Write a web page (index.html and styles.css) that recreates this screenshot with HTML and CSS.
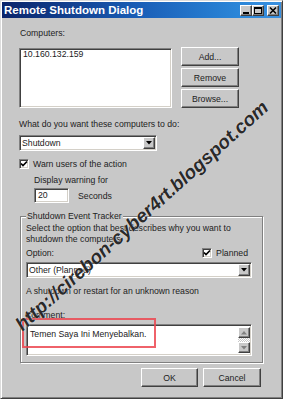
FILE: index.html
```html
<!DOCTYPE html>
<html>
<head>
<meta charset="utf-8">
<link rel="stylesheet" href="styles.css">
</head>
<body>
<div class="window">
  <div class="titlebar">
    <span class="title">Remote Shutdown Dialog</span>
    <div class="tbtns">
      <span class="tbtn"><svg width="10" height="9" viewBox="0 0 10 9"><rect x="2" y="6" width="6" height="2" fill="#000"/></svg></span>
      <span class="tbtn"><svg width="10" height="9" viewBox="0 0 10 9"><rect x="1.5" y="1.5" width="7" height="6" fill="none" stroke="#000"/><rect x="1" y="1" width="8" height="2" fill="#000"/></svg></span>
      <span class="tbtn close"><svg width="10" height="9" viewBox="0 0 10 9"><path d="M2 1.5 L8 7.5 M8 1.5 L2 7.5" stroke="#000" stroke-width="1.6"/></svg></span>
    </div>
  </div>
  <div class="content">
    <div class="label l-computers">Computers:</div>
    <div class="comp-row">
      <div class="listbox sunken"><div class="item">10.160.132.159</div></div>
      <div class="btn-col">
        <div class="btn">Add...</div>
        <div class="btn">Remove</div>
        <div class="btn">Browse...</div>
      </div>
    </div>
    <div class="label l-what">What do you want these computers to do:</div>
    <div class="combo combo-action sunken">
      <span class="combo-text">Shutdown</span>
      <span class="arrow"><svg width="6" height="4" viewBox="0 0 6 4"><path d="M0 0 H6 L3 3.5 Z" fill="#000"/></svg></span>
    </div>
    <div class="check-row warn">
      <span class="cb sunken"><svg width="8" height="8" viewBox="0 0 8 8"><path d="M1 3.5 L3 5.5 L7 1.5" fill="none" stroke="#000" stroke-width="1.7"/></svg></span>
      <span>Warn users of the action</span>
    </div>
    <div class="label l-display">Display warning for</div>
    <div class="seconds-row">
      <div class="edit sunken">20</div>
      <span>Seconds</span>
    </div>
    <fieldset class="group">
      <legend>Shutdown Event Tracker</legend>
      <p class="desc">Select the option that best describes why you want to<br>shutdown the computers</p>
      <div class="option-row">
        <span>Option:</span>
        <span class="check-row planned">
          <span class="cb sunken"><svg width="8" height="8" viewBox="0 0 8 8"><path d="M1 3.5 L3 5.5 L7 1.5" fill="none" stroke="#000" stroke-width="1.7"/></svg></span>
          <span>Planned</span>
        </span>
      </div>
      <div class="combo combo-option sunken">
        <span class="combo-text">Other (Planned)</span>
        <span class="arrow"><svg width="6" height="4" viewBox="0 0 6 4"><path d="M0 0 H6 L3 3.5 Z" fill="#000"/></svg></span>
      </div>
      <p class="reason">A shutdown or restart for an unknown reason</p>
      <div class="label l-comment">Comment:</div>
      <div class="comment sunken">
        <span class="ctext">Temen Saya Ini Menyebalkan.</span>
        <div class="scrollbar">
          <span class="sbtn"><svg width="6" height="4" viewBox="0 0 6 4"><path d="M0 3.5 H6 L3 0 Z" fill="#808080"/></svg></span>
          <span class="track"></span>
          <span class="sbtn"><svg width="6" height="4" viewBox="0 0 6 4"><path d="M0 0 H6 L3 3.5 Z" fill="#808080"/></svg></span>
        </div>
      </div>
    </fieldset>
    <div class="actions">
      <div class="btn ok">OK</div>
      <div class="btn cancel">Cancel</div>
    </div>
  </div>
  <div class="highlight"></div>
  <div class="watermark">http://cirebon-cyber4rt.blogspot.com</div>
</div>
</body>
</html>
```
FILE: styles.css
```css
body {
  margin: 0;
  background: #fff;
  font-family: "Liberation Sans", Arial, sans-serif;
  font-size: 8.7px;
  color: #222;
}

.window {
  position: relative;
  width: 283px;
  height: 399px;
  box-sizing: border-box;
  background: #c8c8c8;
  border: 1px solid;
  border-color: #dcdcdc #404040 #404040 #dcdcdc;
  box-shadow: inset 1px 1px #fff, inset -1px -1px #808080;
  padding: 1px;
  overflow: hidden;
}

.titlebar {
  height: 16px;
  display: flex;
  align-items: center;
  justify-content: space-between;
  padding: 0 2px;
  background: linear-gradient(90deg, #0a246a 0%, #1a5fb8 50%, #2a86d8 85%, #3a90e0 100%);
}

.title {
  color: #fff;
  font-family: "Liberation Sans Narrow", "Liberation Sans", Arial, sans-serif;
  font-weight: bold;
  font-size: 11.5px;
  line-height: 16px;
  white-space: nowrap;
}

.tbtns {
  display: flex;
}

.tbtn {
  width: 12px;
  height: 11px;
  box-sizing: border-box;
  background: #c8c8c8;
  border: 1px solid;
  border-color: #fff #404040 #404040 #fff;
  box-shadow: inset -1px -1px #808080;
  display: flex;
  align-items: flex-start;
  justify-content: flex-start;
}

.tbtn svg {
  display: block;
}

.tbtn.close {
  margin-left: 3px;
}

.content {
  padding-left: 17px;
}

.sunken {
  box-sizing: border-box;
  background: #fff;
  border: 1px solid;
  border-color: #808080 #fff #fff #808080;
  box-shadow: inset 1px 1px #404040, inset -1px -1px #d4d0c8;
}

.btn {
  box-sizing: border-box;
  background: #c8c8c8;
  border: 1px solid;
  border-color: #fff #404040 #404040 #fff;
  box-shadow: inset -1px -1px #808080;
  display: flex;
  align-items: center;
  justify-content: center;
  white-space: nowrap;
}

.label {
  line-height: 12px;
  height: 12px;
  white-space: nowrap;
}

.l-computers {
  margin-top: 9px;
  padding-left: 1px;
}

.comp-row {
  display: flex;
  margin-top: 8px;
}

.listbox {
  width: 153px;
  height: 60px;
  margin-top: 1px;
  padding: 1px 3px;
}

.item {
  line-height: 8px;
}

.btn-col {
  display: flex;
  flex-direction: column;
  gap: 2px;
  margin-left: 9px;
}

.btn-col .btn {
  width: 58px;
  height: 19px;
}

.l-what {
  margin-top: 10px;
}

.combo {
  display: flex;
  align-items: center;
  justify-content: space-between;
  height: 16px;
  padding-left: 2px;
  padding-right: 1px;
}

.combo-text {
  white-space: nowrap;
  line-height: 12px;
}

.combo-action {
  width: 138px;
  margin-top: 5px;
}

.arrow {
  width: 12px;
  height: 12px;
  box-sizing: border-box;
  background: #c8c8c8;
  border: 1px solid;
  border-color: #fff #404040 #404040 #fff;
  box-shadow: inset -1px -1px #808080;
  display: flex;
  align-items: center;
  justify-content: center;
}

.arrow svg {
  display: block;
}

.check-row {
  display: flex;
  align-items: center;
  gap: 4px;
  height: 12px;
  white-space: nowrap;
}

.warn {
  margin-top: 7px;
}

.cb {
  width: 10px;
  height: 10px;
  display: flex;
  align-items: center;
  justify-content: center;
}

.cb svg {
  display: block;
}

.l-display {
  margin-top: 4px;
  padding-left: 15px;
}

.seconds-row {
  display: flex;
  align-items: center;
  gap: 9px;
  margin-top: 2px;
  padding-left: 15px;
}

.edit {
  width: 35px;
  height: 15px;
  line-height: 11px;
  padding: 1px 3px;
}

.group {
  width: 243px;
  box-sizing: border-box;
  margin: 7px 0 0 1px;
  padding: 0 5px 6px 5px;
  border: 1px solid #808080;
  box-shadow: 1px 1px 0 #fff, inset 1px 1px 0 #fff;
  min-width: 0;
}

.group legend {
  padding: 0 1px;
  line-height: 12px;
  background: #c8c8c8;
  white-space: nowrap;
}

.desc {
  margin: 1px 0 0;
  line-height: 11px;
  white-space: nowrap;
}

.option-row {
  display: flex;
  align-items: center;
  height: 12px;
  margin-top: 2px;
}

.planned {
  margin-left: auto;
  margin-right: 9px;
}

.combo-option {
  width: 226px;
  margin-top: 3px;
}

.reason {
  margin: 7px 0 0;
  line-height: 12px;
  white-space: nowrap;
}

.l-comment {
  margin-top: 12px;
  margin-left: -1px;
}

.comment {
  display: flex;
  width: 226px;
  height: 32px;
  margin-top: 3px;
  padding: 2px 1px 2px 3px;
}

.ctext {
  line-height: 12px;
  padding-top: 1px;
  white-space: nowrap;
}

.scrollbar {
  margin-left: auto;
  width: 12px;
  display: flex;
  flex-direction: column;
}

.sbtn {
  height: 11px;
  box-sizing: border-box;
  background: #c8c8c8;
  border: 1px solid;
  border-color: #fff #404040 #404040 #fff;
  box-shadow: inset -1px -1px #808080;
  display: flex;
  align-items: center;
  justify-content: center;
}

.track {
  flex: 1;
  background-color: #fff;
  background-image: repeating-conic-gradient(#c8c8c8 0 25%, #fff 0 50%);
  background-size: 2px 2px;
}

.actions {
  display: flex;
  justify-content: flex-end;
  gap: 5px;
  width: 243px;
  margin: 5px 0 0 1px;
  padding-right: 2px;
  box-sizing: border-box;
}

.actions .btn {
  height: 19px;
}

.ok {
  width: 57px;
}

.cancel {
  width: 58px;
}

.highlight {
  position: absolute;
  left: 21px;
  top: 317px;
  width: 134px;
  height: 30px;
  box-sizing: border-box;
  border: 2px solid rgba(236, 70, 80, 0.85);
}

.watermark {
  position: absolute;
  left: -39px;
  top: 203px;
  width: 360px;
  line-height: 24px;
  text-align: center;
  white-space: nowrap;
  font-family: "Liberation Sans Narrow", "Liberation Sans", sans-serif;
  font-size: 19px;
  font-weight: bold;
  font-style: italic;
  color: #2a2a2a;
  text-shadow: 0 0 1px #fff;
  transform: rotate(-42deg);
}
```
